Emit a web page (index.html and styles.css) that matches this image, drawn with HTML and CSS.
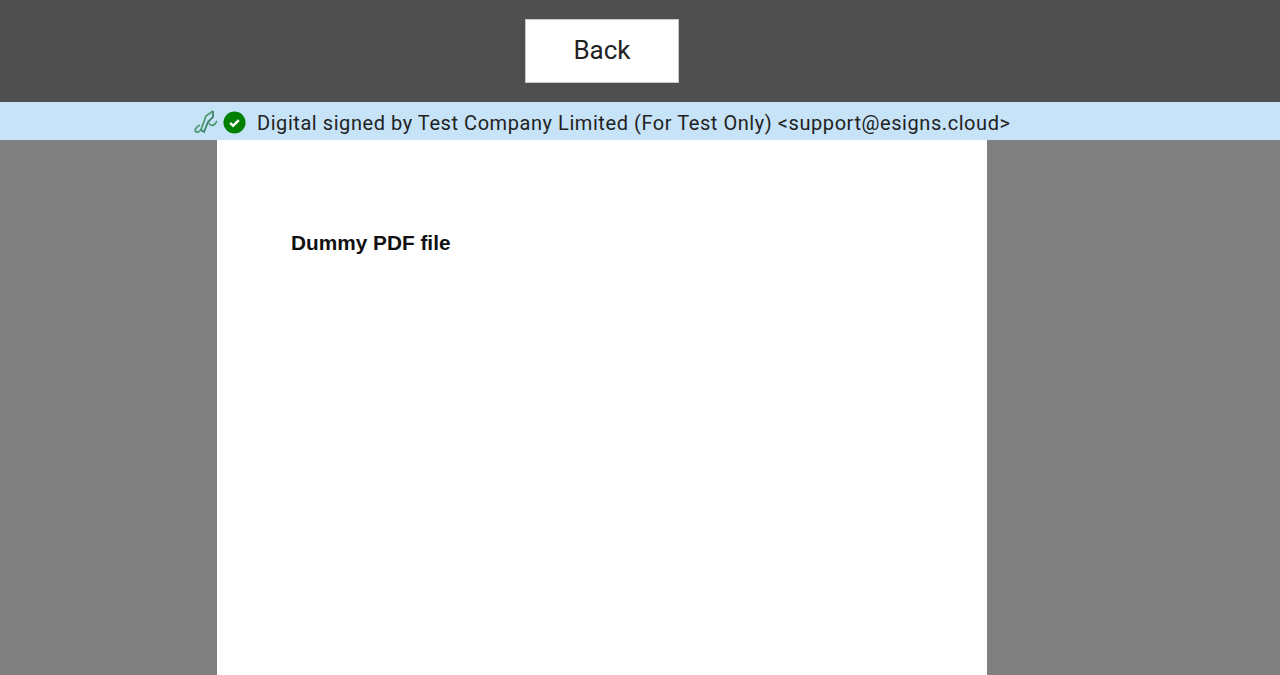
FILE: index.html
```html
<!DOCTYPE html>
<html lang="en">

<head>
    <meta charset="UTF-8">
    <meta name="viewport" content="width=device-width, initial-scale=1.0">
    <title>Dummy PDF file</title>
    <link rel="stylesheet" href="styles.css">
</head>

<body>

    <div class="toolbar">
        <button class="backBtn">Back</button>
    </div>

    <div class="signBar">
        <svg class="penIcon" width="26" height="26" viewBox="0 0 26 26" fill="none">
            <path d="M21 1 L14 6 L10 17 C9 21 6 23 4 22 C2 20 4 17 8 15" stroke="#4f9a73" stroke-width="1.800"/>
            <path d="M21 1 L21 7 L16 12 L12 22 L9 20" stroke="#3c8468" stroke-width="1.800"/>
            <path d="M17 13 C18 16 21 16 23 14 L25 11" stroke="#4f9a73" stroke-width="1.800"/>
        </svg>
        <svg class="okIcon" width="23" height="23" viewBox="0 0 24 24">
            <circle cx="12" cy="12" r="11.500" fill="#008000"/>
            <path d="M7.500 12.500 L10.500 15.500 L16.500 9.500" fill="none" stroke="#fff" stroke-width="2.600"/>
        </svg>
        <span class="signText">Digital signed by Test Company Limited (For Test Only) &lt;support@esigns.cloud&gt;</span>
    </div>

    <div class="viewer">
        <div class="page">
            <h1 class="pageTitle">Dummy PDF file</h1>
        </div>
    </div>

</body>

</html>
```

FILE: styles.css
```css
html,
body {
    height: 100%;
}

body {
    margin: 0;
    display: flex;
    flex-direction: column;
    overflow: hidden;
    background-color: #808080;
}

.toolbar {
    height: 102px;
    flex-shrink: 0;
    box-sizing: border-box;
    padding: 19px 0 0 525px;
    background-color: #4f4f4f;
}

.backBtn {
    display: block;
    width: 154px;
    height: 64px;
    padding: 0 0 2px;
    border: 1px solid #c8c8c8;
    background-color: #fff;
    color: #222;
    font-family: Roboto, sans-serif;
    font-size: 26px;
}

.signBar {
    height: 38px;
    box-sizing: border-box;
    flex-shrink: 0;
    display: flex;
    align-items: center;
    padding: 3px 0 0 192px;
    background-color: #c7e3f8;
}

.penIcon {
    margin-right: 5px;
}

.okIcon {
    margin-right: 11px;
}

.signText {
    font-family: Roboto, sans-serif;
    font-size: 20px;
    letter-spacing: 0.56px;
    color: #222;
    white-space: nowrap;
}

.viewer {
    flex: 1;
    padding-left: 217px;
}

.page {
    width: 770px;
    height: 100%;
    box-sizing: border-box;
    padding: 91px 0 0 74px;
    background-color: #fff;
}

.pageTitle {
    margin: 0;
    font-family: "Liberation Sans", Arial, sans-serif;
    font-size: 20.8px;
    font-weight: 700;
    line-height: 24px;
    color: #111;
}
```
